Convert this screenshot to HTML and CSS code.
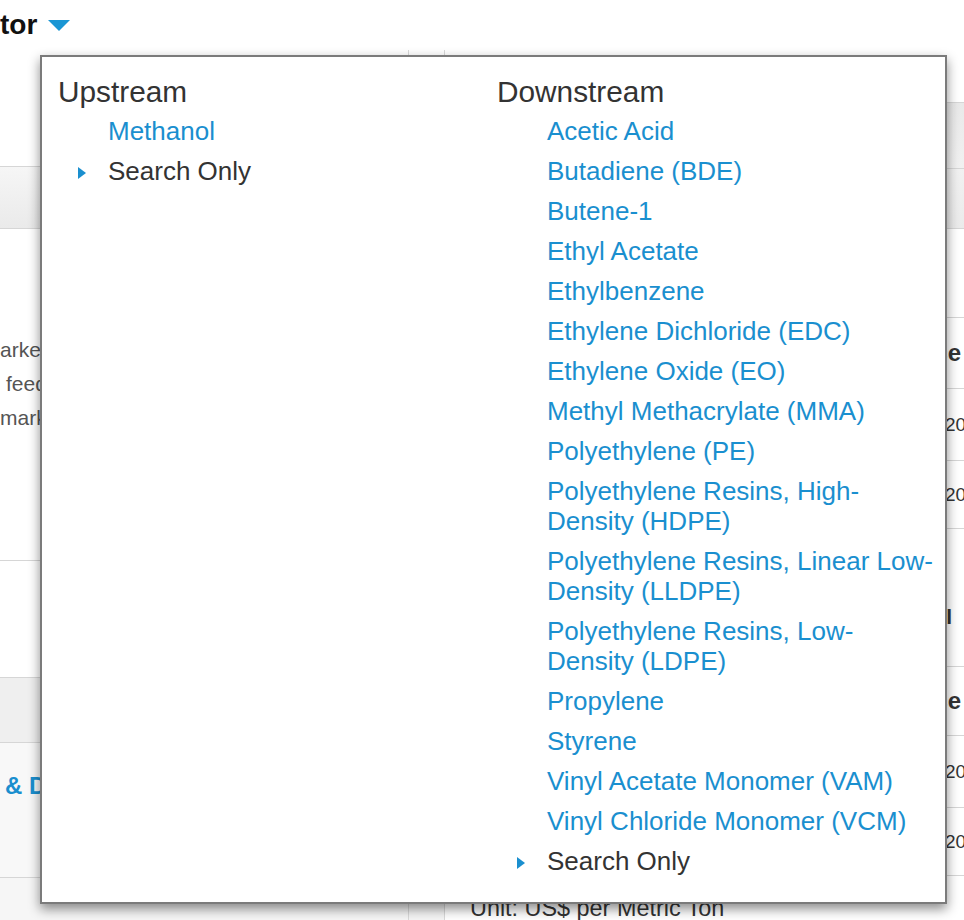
FILE: index.html
```html
<!DOCTYPE html>
<html lang="en">
<head>
<meta charset="utf-8">
<title>Sector</title>
<link rel="stylesheet" href="styles.css">
</head>
<body>
<header class="top">
  <h1 class="title">tor</h1>
  <svg class="caret" width="22" height="11" viewBox="0 0 22 11" aria-hidden="true"><path d="M0 0H22L11 11Z" fill="#1a96d4"/></svg>
</header>

<div class="page">
  <section class="left">
    <div class="l-top"></div>
    <div class="l-band"></div>
    <div class="l-text">
      <p class="ln">arket developments</p>
      <p class="ln ind">feedstock costs</p>
      <p class="ln">markets</p>
    </div>
    <div class="l-blank"></div>
    <div class="l-band2"></div>
    <div class="l-links"><a class="blue-bold" href="#">&amp; Demand</a></div>
    <div class="l-foot"></div>
  </section>
  <div class="gutter"></div>
  <section class="right">
    <div class="r-top"></div>
    <div class="r-band1"></div>
    <div class="r-band2"></div>
    <div class="r-gap"></div>
    <div class="r-head">Price</div>
    <div class="r-row r-row-a"><span></span><span>2017</span></div>
    <div class="r-row r-row-b"><span></span><span>2017</span></div>
    <div class="r-title">Methanol</div>
    <div class="r-head r-head2">Price</div>
    <div class="r-row r-row-a"><span></span><span>2017</span></div>
    <div class="r-row r-row-b"><span></span><span>2017</span></div>
    <div class="r-unit">Unit: US$ per Metric Ton</div>
  </section>
</div>

<nav class="menu">
  <div class="col">
    <h2 class="col-head">Upstream</h2>
    <ul class="items">
      <li><a href="#">Methanol</a></li>
      <li class="search">Search Only</li>
    </ul>
  </div>
  <div class="col">
    <h2 class="col-head">Downstream</h2>
    <ul class="items">
      <li><a href="#">Acetic Acid</a></li>
      <li><a href="#">Butadiene (BDE)</a></li>
      <li><a href="#">Butene-1</a></li>
      <li><a href="#">Ethyl Acetate</a></li>
      <li><a href="#">Ethylbenzene</a></li>
      <li><a href="#">Ethylene Dichloride (EDC)</a></li>
      <li><a href="#">Ethylene Oxide (EO)</a></li>
      <li><a href="#">Methyl Methacrylate (MMA)</a></li>
      <li><a href="#">Polyethylene (PE)</a></li>
      <li><a href="#">Polyethylene Resins, High-Density (HDPE)</a></li>
      <li><a href="#">Polyethylene Resins, Linear Low-Density (LLDPE)</a></li>
      <li><a href="#">Polyethylene Resins, Low-Density (LDPE)</a></li>
      <li><a href="#">Propylene</a></li>
      <li><a href="#">Styrene</a></li>
      <li><a href="#">Vinyl Acetate Monomer (VAM)</a></li>
      <li><a href="#">Vinyl Chloride Monomer (VCM)</a></li>
      <li class="search">Search Only</li>
    </ul>
  </div>
</nav>
</body>
</html>
```

FILE: styles.css
```css
html, body {
  margin: 0;
  padding: 0;
}
body {
  width: 964px;
  height: 920px;
  overflow: hidden;
  position: relative;
  background: #fff;
  font-family: "Liberation Sans", Arial, Helvetica, sans-serif;
  color: #333;
}

/* ---------- header ---------- */
.top {
  height: 50px;
  display: flex;
  align-items: center;
  gap: 11px;
}
.title {
  margin: 0;
  font-size: 28px;
  line-height: 50px;
  font-weight: bold;
  color: #111;
}
.caret {
  display: block;
  margin-top: 1px;
}

/* ---------- background page ---------- */
.page {
  display: flex;
  align-items: flex-start;
}
.page > section, .page > .gutter {
  box-sizing: border-box;
}
.left {
  width: 409px;
  border-right: 1px solid #d9d9d9;
  background: #fff;
}
.left > div, .right > div {
  box-sizing: border-box;
  border-bottom: 1px solid #d6d6d6;
}
.l-top { height: 117px; }
.l-band {
  height: 62px;
  background: linear-gradient(#f6f6f6, #eaeaea);
}
.l-text {
  height: 332px;
  padding-top: 104px;
}
.ln {
  margin: 0;
  font-size: 21px;
  line-height: 34px;
  color: #555;
  white-space: nowrap;
}
.ind { padding-left: 6px; }
.l-blank { height: 117px; }
.l-band2 {
  height: 65px;
  background: #efefef;
}
.l-links {
  height: 135px;
  padding: 28px 0 0 5px;
  background: #f8f8f8;
}
.blue-bold {
  font-size: 24px;
  line-height: 30px;
  font-weight: bold;
  color: #1a8fcf;
  text-decoration: none;
  white-space: nowrap;
}
.l-foot {
  height: 60px;
  background: #f6f6f6;
  border-bottom: none !important;
}

.gutter {
  width: 35px;
  height: 860px;
  margin-top: 10px;
  background: #f5f5f5;
}
.right {
  flex: 1;
  border-left: 1px solid #d9d9d9;
  min-width: 0;
}
.r-top { height: 53px; }
.r-band1 {
  height: 66px;
  background: linear-gradient(#e9e9e9, #f1f1f1);
}
.r-band2 {
  height: 60px;
  background: linear-gradient(#f1f1f1, #ebebeb);
}
.r-gap { height: 89px; }
.r-head {
  height: 71px;
  padding-right: 3px;
  text-align: right;
  font-size: 24px;
  font-weight: bold;
  line-height: 70px;
  color: #333;
}
.r-head2 { height: 69px; line-height: 68px; }
.r-row {
  display: grid;
  grid-template-columns: 500px 1fr;
  font-size: 19px;
  color: #333;
  white-space: nowrap;
  overflow: hidden;
}
.r-row-a { height: 72px; line-height: 71px; }
.r-row-b { height: 68px; line-height: 67px; }
.r-title {
  height: 138px;
  padding: 73px 12px 0 0;
  text-align: right;
  font-size: 21px;
  font-weight: bold;
  line-height: 30px;
  color: #333;
}
.r-unit {
  border-bottom: none !important;
  padding: 18px 0 0 25px;
  font-size: 23.4px;
  line-height: 28px;
  color: #333;
  white-space: nowrap;
}

/* ---------- dropdown menu ---------- */
.menu {
  position: absolute;
  left: 40px;
  top: 55px;
  width: 907px;
  box-sizing: border-box;
  border: 2px solid #7b7b7b;
  background: #fff;
  box-shadow: 0 5px 11px rgba(0, 0, 0, 0.45);
  padding: 18px 9px 26px 16px;
  display: grid;
  grid-template-columns: 439px 1fr;
}
.col-head {
  margin: 0 0 7px;
  font-size: 29.8px;
  line-height: 34px;
  font-weight: normal;
  color: #333;
}
.items {
  list-style: none;
  margin: 0;
  padding: 0;
}
.items li {
  width: 389px;
  padding-left: 50px;
  font-size: 26px;
  line-height: 30px;
  color: #333;
}
.items li + li {
  margin-top: 10px;
}
.items a {
  color: #1a8fcf;
  text-decoration: none;
}
.items li.search::before {
  content: "";
  display: inline-block;
  width: 0;
  height: 0;
  border-left: 8px solid #1a8fcf;
  border-top: 6px solid transparent;
  border-bottom: 6px solid transparent;
  margin-left: -30px;
  margin-right: 22px;
  vertical-align: middle;
}
```
